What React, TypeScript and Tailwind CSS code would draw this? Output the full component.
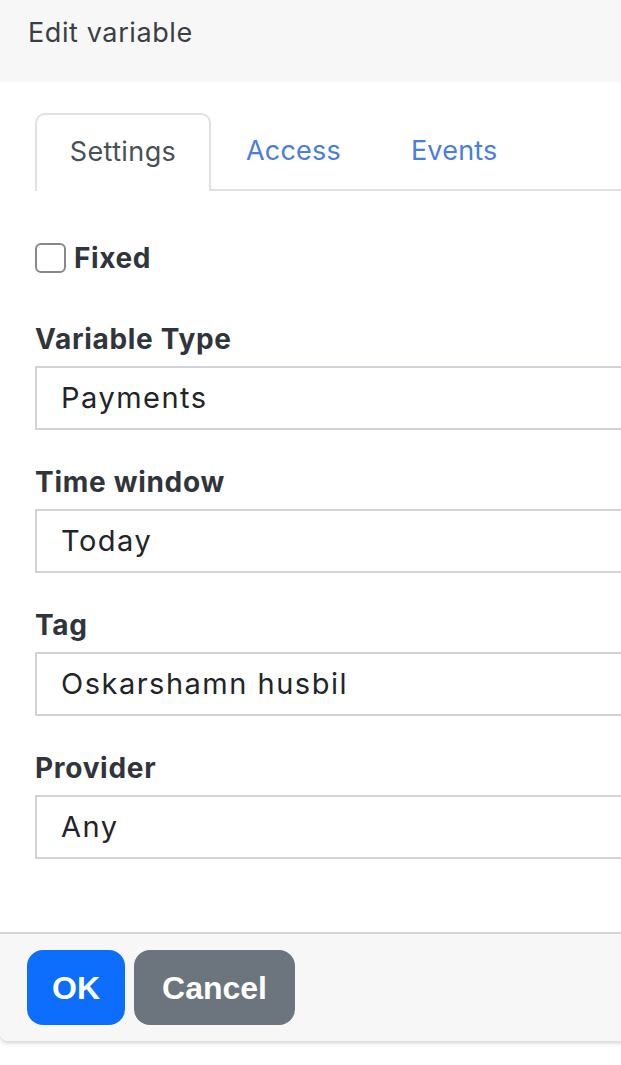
import React, { useState } from "react";

const fields = [
  { label: "Variable Type", value: "Payments" },
  { label: "Time window", value: "Today" },
  { label: "Tag", value: "Oskarshamn husbil" },
  { label: "Provider", value: "Any" },
];

const tabs = ["Settings", "Access", "Events"];

const App = () => {
  const [activeTab, setActiveTab] = useState("Settings");
  const [fixed, setFixed] = useState(false);

  return (
    <div className="w-[621px] h-[1065px] overflow-hidden bg-white font-['Inter',sans-serif]">
      <div className="w-[720px] rounded-b-[8px] shadow-[0_2px_4px_rgba(0,0,0,0.18)]">
        <div className="h-[82px] bg-[#f7f7f7] px-[28px] pt-[16px]">
          <h1 className="text-[27px] leading-[34px] tracking-[0.6px] text-[#3a3f45]">Edit variable</h1>
        </div>

        <div className="px-[35px] pt-[31px] pb-[73px] bg-white">
          <div className="flex border-b-2 border-[#dee2e6]">
            {tabs.map((tab) => (
              <button
                key={tab}
                onClick={() => setActiveTab(tab)}
                className={
                  tab === activeTab
                    ? "w-[176px] h-[78px] -mb-[2px] pb-[2px] border-2 border-b-0 border-[#dee2e6] rounded-t-[10px] bg-white text-[27px] tracking-[0.4px] text-[#495057]"
                    : "h-[76px] px-[35px] text-[27px] tracking-[0.2px] text-[#4a7ddc]"
                }
              >
                {tab}
              </button>
            ))}
          </div>

          <label className="mt-[51px] flex items-center gap-[8px] cursor-pointer">
            <span
              onClick={() => setFixed(!fixed)}
              className="w-[31px] h-[30px] border-[2.5px] border-[#85898d] rounded-[6px] bg-white"
            />
            <span className="text-[28px] leading-[32px] tracking-[0.6px] font-bold text-[#30353b]">Fixed</span>
          </label>

          <div className="mt-[47px] flex flex-col gap-[34px]">
            {fields.map((f) => (
              <div key={f.label}>
                <div className="text-[28px] leading-[36px] tracking-[0.7px] font-bold text-[#30353b] mb-[9px]">
                  {f.label}
                </div>
                <div className="h-[64px] border-2 border-[#d0d4d9] px-[24px] flex items-center text-[29px] tracking-[1.5px] text-[#212529]">
                  {f.value}
                </div>
              </div>
            ))}
          </div>
        </div>

        <div className="border-t-2 border-[#d4d4d4] bg-[#f7f7f7] rounded-b-[8px] px-[27px] py-[16px] flex gap-[9px] font-['Liberation_Sans',Arial,sans-serif]">
          <button className="w-[98px] h-[75px] rounded-[16px] bg-[#0d6efd] text-white text-[32px] font-bold">
            OK
          </button>
          <button className="w-[161px] h-[75px] rounded-[16px] bg-[#6c757d] text-white text-[32px] font-bold">
            Cancel
          </button>
        </div>
      </div>
    </div>
  );
};

export default App;
